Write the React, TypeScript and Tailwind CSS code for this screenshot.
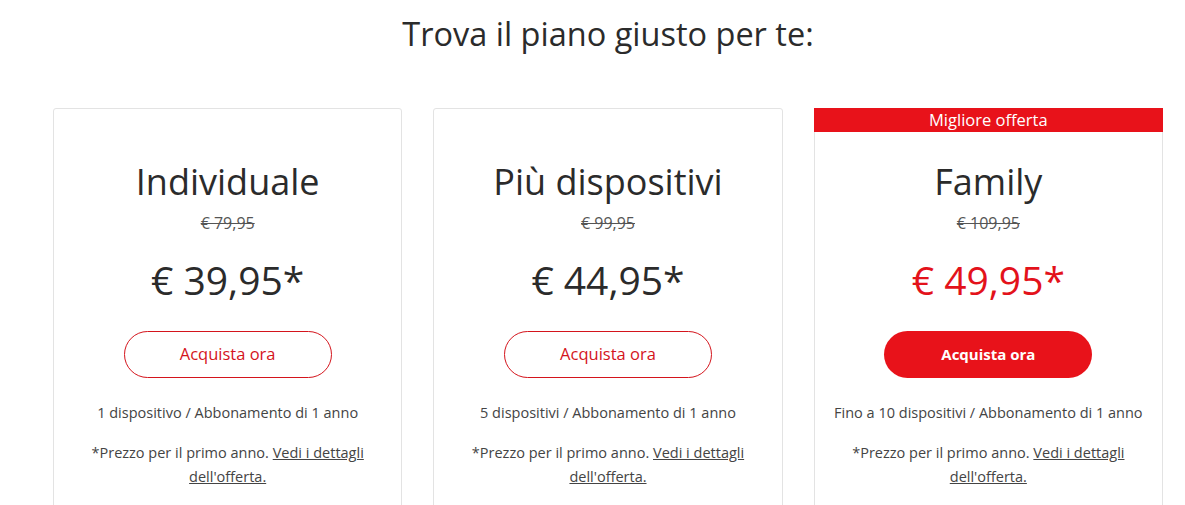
import React from 'react';

type Plan = {
  name: string;
  oldPrice: string;
  price: string;
  devices: string;
  featured?: boolean;
};

const plans: Plan[] = [
  {
    name: 'Individuale',
    oldPrice: '€ 79,95',
    price: '€ 39,95*',
    devices: '1 dispositivo / Abbonamento di 1 anno',
  },
  {
    name: 'Più dispositivi',
    oldPrice: '€ 99,95',
    price: '€ 44,95*',
    devices: '5 dispositivi / Abbonamento di 1 anno',
  },
  {
    name: 'Family',
    oldPrice: '€ 109,95',
    price: '€ 49,95*',
    devices: 'Fino a 10 dispositivi / Abbonamento di 1 anno',
    featured: true,
  },
];

function PlanCard({ plan }: { plan: Plan }) {
  return (
    <div className="relative flex h-[420px] flex-col items-center rounded-[3px] border border-[#e3e3e3] bg-white pt-[50px]">
      {plan.featured && (
        <div className="absolute -top-px -right-px -left-px h-6 bg-[#e8121a] text-center text-[16.5px] leading-6 text-white">
          Migliore offerta
        </div>
      )}
      <h2 className="text-[36px] leading-[46px] text-[#2b2b2b]">{plan.name}</h2>
      <p className="mt-[6px] text-[16px] leading-6 text-[#555] line-through">
        {plan.oldPrice}
      </p>
      <p
        className={`mt-[21px] text-[39px] leading-[48px] ${
          plan.featured ? 'text-[#e3121b]' : 'text-[#2b2b2b]'
        }`}
      >
        {plan.price}
      </p>
      <button
        type="button"
        className={`mt-[27px] h-[47px] w-[208px] rounded-full ${
          plan.featured
            ? 'bg-[#e8121a] text-[15px] font-bold text-white'
            : 'border border-[#d4141c] bg-white text-[16.5px] text-[#d4141c]'
        }`}
      >
        Acquista ora
      </button>
      <p className="mt-[25px] text-[14.5px] leading-5 text-[#444]">{plan.devices}</p>
      <p className="mt-[18px] w-[300px] text-center text-[14.5px] leading-6 text-[#444]">
        *Prezzo per il primo anno.{' '}
        <a href="#" className="underline">
          Vedi i dettagli dell'offerta.
        </a>
      </p>
    </div>
  );
}

export default function App() {
  return (
    <div
      className="h-[505px] overflow-hidden bg-white"
      style={{ fontFamily: '"Open Sans", sans-serif' }}
    >
      <div className="w-[1163px] pl-[53px]">
        <h1 className="pt-[12px] text-center text-[32.5px] leading-[44px] text-[#2b2b2b]">
          Trova il piano giusto per te:
        </h1>
        <div className="mt-[52px] grid grid-cols-3 gap-[31px]">
          {plans.map((p) => (
            <PlanCard key={p.name} plan={p} />
          ))}
        </div>
      </div>
    </div>
  );
}
